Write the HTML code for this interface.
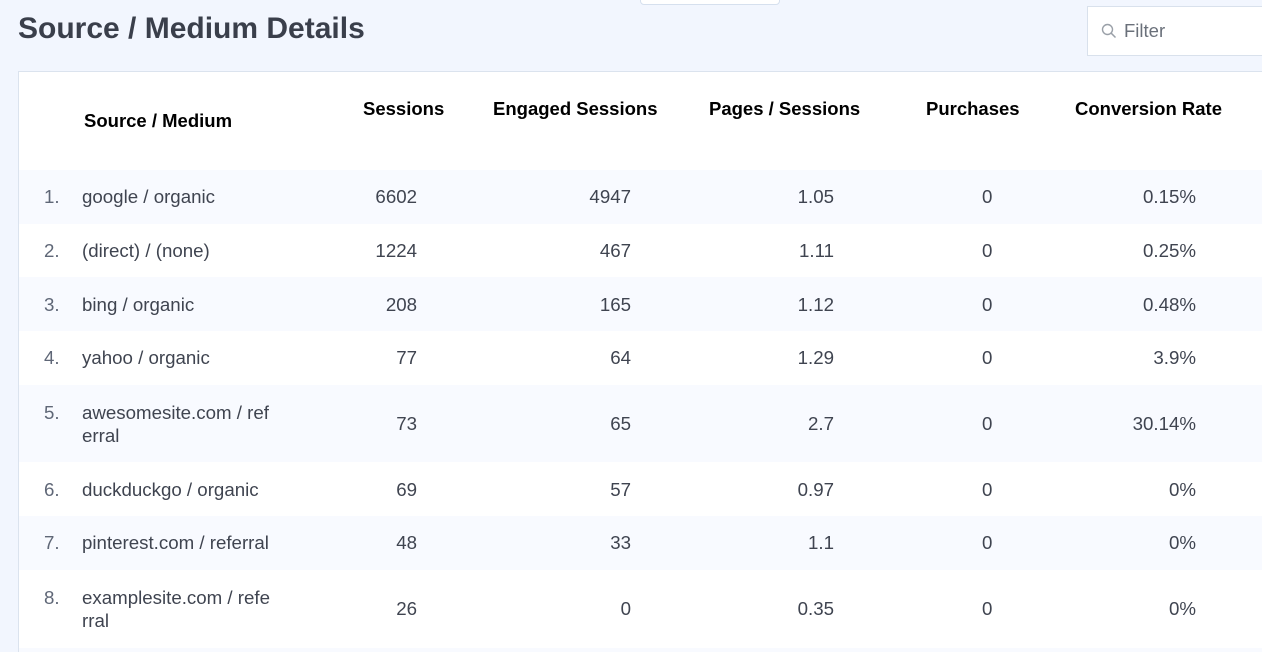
<!DOCTYPE html>
<html><head><meta charset="utf-8"><style>
*{margin:0;padding:0;box-sizing:border-box}
html,body{width:1262px;height:652px;overflow:hidden}
body{background:#f2f6fe;font-family:"Liberation Sans",Arial,sans-serif;position:relative}
.a{position:absolute;white-space:nowrap}
h1{position:absolute;left:18px;top:12px;font-size:30px;font-weight:bold;color:#3a3f4b}
.tab{position:absolute;left:640px;top:-6px;width:140px;height:11px;background:#fff;border:1px solid #d6e0ee;border-radius:4px}
.filter{position:absolute;left:1087px;top:6px;width:190px;height:50px;background:#fff;border:1px solid #d9e1ec}
.card{position:absolute;left:18px;top:71px;width:1260px;height:590px;background:#fff;border:1px solid #dbe3ee}
.th{position:absolute;font-size:18.5px;font-weight:bold;color:#000;white-space:nowrap}
.row{position:absolute;left:19px;width:1243px}
.row.s{background:#f8faff}
.c{position:absolute;font-size:18.7px;color:#3f4450;white-space:nowrap;line-height:23px}
.n{color:#5f6777}
.r{text-align:right}
</style></head><body>
<h1>Source / Medium Details</h1>
<div class="tab"></div>
<div class="filter">
<svg class="a" style="left:13px;top:16px" width="16" height="16" viewBox="0 0 16 16"><circle cx="6.5" cy="6.5" r="5" fill="none" stroke="#9aa0a8" stroke-width="1.4"/><path d="M10.2 10.2L14.5 14.5" stroke="#9aa0a8" stroke-width="1.5"/></svg>
<span class="a" style="left:36px;top:13px;font-size:18.5px;color:#6a707a">Filter</span>
</div>
<div class="card"></div>
<div class="th" style="left:84px;top:110px">Source / Medium</div>
<div class="th" style="left:363px;top:98px">Sessions</div>
<div class="th" style="left:493px;top:98px">Engaged Sessions</div>
<div class="th" style="left:709px;top:98px">Pages / Sessions</div>
<div class="th" style="left:926px;top:98px">Purchases</div>
<div class="th" style="left:1075px;top:98px">Conversion Rate</div>

<div class="row s" style="top:170px;height:54px"></div>
<div class="row" style="top:224px;height:53px"></div>
<div class="row s" style="top:277px;height:54px"></div>
<div class="row" style="top:331px;height:54px"></div>
<div class="row s" style="top:385px;height:77px"></div>
<div class="row" style="top:462px;height:54px"></div>
<div class="row s" style="top:516px;height:54px"></div>
<div class="row" style="top:570px;height:78px"></div>
<div class="row s" style="top:648px;height:10px"></div>

<div id="rows"></div>
<script>
var d=[["google / organic","6602","4947","1.05","0","0.15%",185,0],
["(direct) / (none)","1224","467","1.11","0","0.25%",239,0],
["bing / organic","208","165","1.12","0","0.48%",293,0],
["yahoo / organic","77","64","1.29","0","3.9%",346,0],
["awesomesite.com / ref<br>erral","73","65","2.7","0","30.14%",412,1],
["duckduckgo / organic","69","57","0.97","0","0%",478,0],
["pinterest.com / referral","48","33","1.1","0","0%",531,0],
["examplesite.com / refe<br>rral","26","0","0.35","0","0%",597,1]];
var h="";
d.forEach(function(r,i){var y=r[6];var ty=r[7]?y-11:y;
h+='<div class="c n" style="left:44px;top:'+ty+'px">'+(i+1)+'.</div>';
h+='<div class="c" style="left:82px;top:'+ty+'px">'+r[0]+'</div>';
h+='<div class="c r" style="right:845px;top:'+y+'px">'+r[1]+'</div>';
h+='<div class="c r" style="right:631px;top:'+y+'px">'+r[2]+'</div>';
h+='<div class="c r" style="right:428px;top:'+y+'px">'+r[3]+'</div>';
h+='<div class="c" style="left:982px;top:'+y+'px">'+r[4]+'</div>';
h+='<div class="c r" style="right:66px;top:'+y+'px">'+r[5]+'</div>';});
document.getElementById("rows").innerHTML=h;
</script>
</body></html>
